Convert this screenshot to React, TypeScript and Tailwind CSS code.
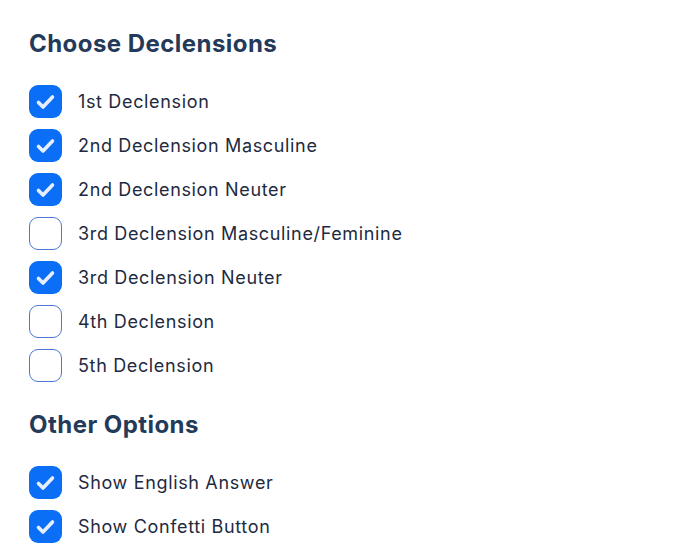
import { useState } from 'react'

interface Option {
  id: string
  label: string
  checked: boolean
}

const declensions: Option[] = [
  { id: 'd1', label: '1st Declension', checked: true },
  { id: 'd2m', label: '2nd Declension Masculine', checked: true },
  { id: 'd2n', label: '2nd Declension Neuter', checked: true },
  { id: 'd3mf', label: '3rd Declension Masculine/Feminine', checked: false },
  { id: 'd3n', label: '3rd Declension Neuter', checked: true },
  { id: 'd4', label: '4th Declension', checked: false },
  { id: 'd5', label: '5th Declension', checked: false },
]

const otherOptions: Option[] = [
  { id: 'english', label: 'Show English Answer', checked: true },
  { id: 'confetti', label: 'Show Confetti Button', checked: true },
]

function CheckRow({ option, onToggle }: { option: Option; onToggle: () => void }) {
  return (
    <label className="flex items-center gap-4 cursor-pointer select-none h-[33px]">
      <button
        type="button"
        role="checkbox"
        aria-checked={option.checked}
        onClick={onToggle}
        className={
          option.checked
            ? 'w-[33px] h-[33px] rounded-[9px] bg-[#0b6ef6] flex items-center justify-center shrink-0'
            : 'w-[33px] h-[33px] rounded-[9px] bg-white border-[1.5px] border-[#4a78d4] shrink-0'
        }
      >
        {option.checked && (
          <svg width="33" height="33" viewBox="0 0 33 33" fill="none">
            <path
              d="M9.5 17.5l4.5 4.5 9.5-10"
              stroke="#e6efff"
              strokeWidth="3.6"
              strokeLinecap="round"
              strokeLinejoin="round"
            />
          </svg>
        )}
      </button>
      <span className="text-[18px] leading-[24px] text-[#1e2a40] tracking-[0.65px]">{option.label}</span>
    </label>
  )
}

function Section({
  title,
  items,
  onToggle,
}: {
  title: string
  items: Option[]
  onToggle: (id: string) => void
}) {
  return (
    <section>
      <h2 className="text-[24px] leading-[32px] font-bold text-[#243a5a] tracking-[0.45px]">{title}</h2>
      <div className="mt-[25px] flex flex-col gap-[11px]">
        {items.map((item) => (
          <CheckRow key={item.id} option={item} onToggle={() => onToggle(item.id)} />
        ))}
      </div>
    </section>
  )
}

export default function App() {
  const [decl, setDecl] = useState(declensions)
  const [other, setOther] = useState(otherOptions)

  const toggle = (list: Option[], id: string) =>
    list.map((o) => (o.id === id ? { ...o, checked: !o.checked } : o))

  return (
    <div
      className="w-[700px] h-[560px] bg-white pl-[29px] pt-[28px] flex flex-col gap-[27px] overflow-hidden"
      style={{ fontFamily: 'Inter, "Noto Sans", sans-serif' }}
    >
      <Section title="Choose Declensions" items={decl} onToggle={(id) => setDecl(toggle(decl, id))} />
      <Section title="Other Options" items={other} onToggle={(id) => setOther(toggle(other, id))} />
    </div>
  )
}
